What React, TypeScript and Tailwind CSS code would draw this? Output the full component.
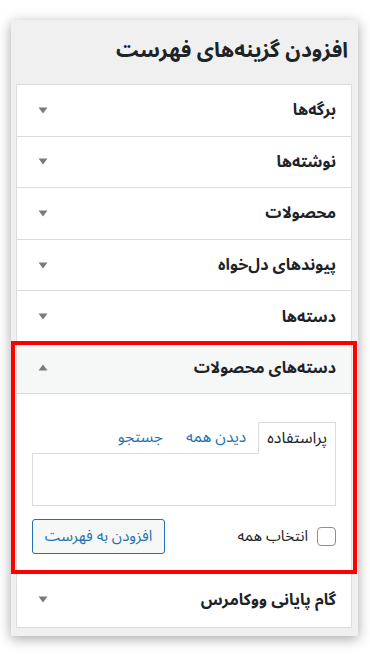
import React from "react";

const Down = () => (
  <svg width="10" height="7" viewBox="0 0 10 7" className="shrink-0">
    <path d="M0.5 0.5 L9.5 0.5 L5 6.5 Z" fill="#787c82" />
  </svg>
);
const Up = () => (
  <svg width="10" height="7" viewBox="0 0 10 7" className="shrink-0">
    <path d="M0.5 6.5 L9.5 6.5 L5 0.5 Z" fill="#787c82" />
  </svg>
);

const Row = ({ label, last }: { label: string; last?: boolean }) => (
  <div
    className={
      "flex items-center justify-between pr-[15px] pl-[21px] bg-white " +
      (last ? "h-[54px]" : "h-[51.6px] border-b border-[#dcdcde]")
    }
  >
    <span className="text-[16px] font-bold text-[#1d2327]">{label}</span>
    <Down />
  </div>
);

export default function App() {
  return (
    <div
      dir="rtl"
      className="relative min-h-[656px] bg-white pt-5 pr-[12px] pl-[11px]"
      style={{ fontFamily: '"Noto Sans Arabic", "DejaVu Sans", "Noto Sans", sans-serif' }}
    >
      <div className="bg-[#f0f0f1] pr-[6px] pl-[5px] pb-2 shadow-[0_3px_12px_rgba(0,0,0,0.35)]">
        <div className="flex h-16 items-center pr-[4px]">
          <h2 className="-mt-[3px] text-[21px] font-bold text-[#1d2327]">افزودن گزینه‌های فهرست</h2>
        </div>
        <div className="border border-[#dcdcde] bg-white">
          <Row label="برگه‌ها" />
          <Row label="نوشته‌ها" />
          <Row label="محصولات" />
          <Row label="پیوندهای دل‌خواه" />
          <Row label="دسته‌ها" />
          <div className="border-b border-[#dcdcde]">
            <div className="flex h-[51px] items-center justify-between border-b border-[#dcdcde] bg-[#f6f7f7] pr-[15px] pl-[21px]">
              <span className="text-[16px] font-bold text-[#1d2327]">دسته‌های محصولات</span>
              <Up />
            </div>
            <div className="px-[15px] pt-[28px] pb-[18px]">
              <div className="flex items-end">
                <div className="relative z-10 -mb-px flex h-[32px] items-center border border-b-0 border-[#dcdcde] bg-white px-[8px] text-[16px] text-[#1d2327]">
                  پراستفاده
                </div>
                <div className="mr-[12px] flex h-[31px] items-center text-[15.5px] text-[#2271b1]">دیدن همه</div>
                <div className="mr-[23px] flex h-[31px] items-center text-[15.5px] text-[#2271b1]">جستجو</div>
              </div>
              <div className="h-[53px] border border-[#dcdcde] bg-white" />
              <div className="mt-[13px] flex items-center justify-between">
                <label className="flex items-center gap-[9px] text-[15px] text-[#1d2327]">
                  <span className="h-[19px] w-[19px] rounded-[4px] border border-[#8c8f94] bg-white" />
                  انتخاب همه
                </label>
                <button className="h-[35px] w-[133px] rounded-[3px] border border-[#2271b1] bg-[#f6f7f7] text-[15px] text-[#2271b1]">
                  افزودن به فهرست
                </button>
              </div>
            </div>
          </div>
          <Row label="گام پایانی ووکامرس" last />
        </div>
      </div>
      <div className="pointer-events-none absolute left-[11px] top-[341px] h-[233px] w-[346px] border-4 border-[#ff0000]" />
    </div>
  );
}
